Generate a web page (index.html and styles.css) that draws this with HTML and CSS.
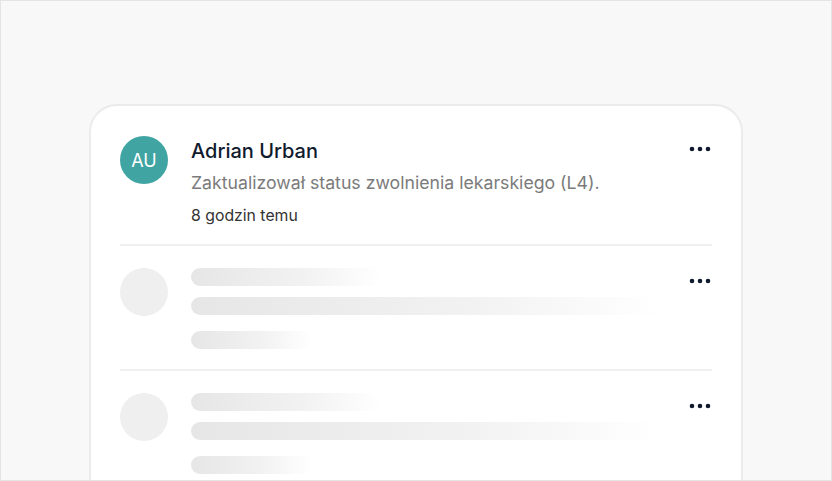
FILE: index.html
```html
<!DOCTYPE html>
<html lang="pl">
<head>
<meta charset="utf-8">
<title>Aktywność</title>
<link rel="stylesheet" href="styles.css">
</head>
<body>
<div class="frame">
  <div class="card">
    <div class="row">
      <div class="avatar">AU</div>
      <div class="body">
        <div class="name">Adrian Urban</div>
        <div class="desc">Zaktualizował status zwolnienia lekarskiego (L4).</div>
        <div class="time">8 godzin temu</div>
      </div>
      <svg class="more" width="24" height="8" viewBox="0 0 24 8"><circle cx="4" cy="4" r="2.3"/><circle cx="12" cy="4" r="2.3"/><circle cx="20" cy="4" r="2.3"/></svg>
    </div>
    <div class="row">
      <div class="avatar sk"></div>
      <div class="body">
        <div class="bar b1"></div>
        <div class="bar b2"></div>
        <div class="bar b3"></div>
      </div>
      <svg class="more" width="24" height="8" viewBox="0 0 24 8"><circle cx="4" cy="4" r="2.3"/><circle cx="12" cy="4" r="2.3"/><circle cx="20" cy="4" r="2.3"/></svg>
    </div>
    <div class="row">
      <div class="avatar sk"></div>
      <div class="body">
        <div class="bar b1"></div>
        <div class="bar b2"></div>
        <div class="bar b3"></div>
      </div>
      <svg class="more" width="24" height="8" viewBox="0 0 24 8"><circle cx="4" cy="4" r="2.3"/><circle cx="12" cy="4" r="2.3"/><circle cx="20" cy="4" r="2.3"/></svg>
    </div>
  </div>
</div>
</body>
</html>
```

FILE: styles.css
```css
* { box-sizing: border-box; }
html, body { margin: 0; padding: 0; }
body { font-family: Inter, "Noto Sans", sans-serif; }
.frame {
  width: 832px;
  height: 481px;
  border: 1px solid #e4e4e4;
  background: #f8f8f8;
  overflow: hidden;
  padding: 103px 0 0 88px;
}
.card {
  width: 654px;
  background: #fff;
  border: 2px solid #ebebeb;
  border-radius: 28px;
  padding: 30px 29px;
}
.row {
  display: grid;
  grid-template-columns: 48px 1fr auto;
  column-gap: 23px;
  align-items: start;
  padding: 22px 0 20px;
  border-top: 2px solid #f0f0f0;
}
.row:first-child { border-top: 0; padding-top: 0; padding-bottom: 17px; }
.avatar {
  width: 48px;
  height: 48px;
  border-radius: 50%;
  background: #3fa4a2;
  color: #fff;
  font-size: 18px;
  display: flex;
  align-items: center;
  justify-content: center;
}
.avatar.sk { background: #efefef; }
.name { font-size: 20px; line-height: 30px; color: #0f1b2d; font-weight: 500; }
.desc { font-size: 17.7px; line-height: 26px; color: #7b7b7b; margin-top: 4px; }
.time { font-size: 15.8px; line-height: 22px; color: #333; margin-top: 9px; }
.more { fill: #0f1b2d; margin-top: 9px; }
.bar {
  height: 18px;
  border-radius: 9px;
  background: linear-gradient(90deg, #e6e6e6 0%, #f2f2f2 60%, rgba(255,255,255,0) 100%);
}
.b1 { width: 190px; }
.b2 { width: 470px; margin-top: 11px; }
.b3 { width: 120px; margin-top: 16px; }
```
